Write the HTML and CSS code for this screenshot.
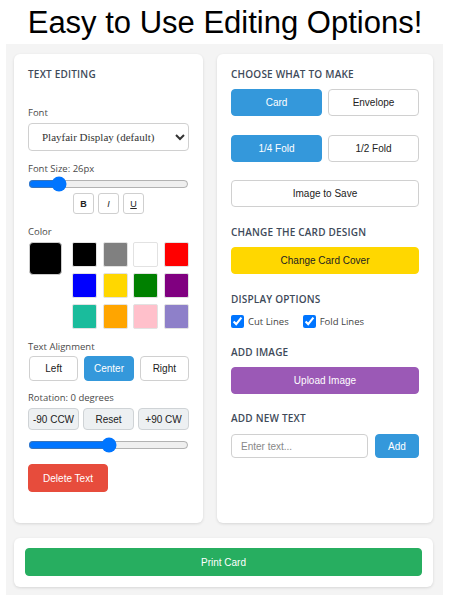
FILE: index.html
```html
<!DOCTYPE html>
<html lang="en">
<head>
<meta charset="utf-8">
<title>Easy to Use Editing Options!</title>
<link rel="stylesheet" href="styles.css">
</head>
<body>
<h1 class="title">Easy to Use Editing Options!</h1>
<div class="app">
  <div class="columns">
    <div class="panel left">
      <h2 class="heading">TEXT EDITING</h2>
      <div class="label first">Font</div>
      <select class="font-select">
        <option>Playfair Display (default)</option>
      </select>
      <div class="label size-label">Font Size: 26px</div>
      <input class="range" type="range" min="12" max="100" value="26">
      <div class="style-row">
        <button class="style-btn bold">B</button>
        <button class="style-btn italic">I</button>
        <button class="style-btn under">U</button>
      </div>
      <div class="label color-label">Color</div>
      <div class="colors">
        <div class="current"></div>
        <div class="swatches">
          <span class="sw" style="background:#000000"></span>
          <span class="sw" style="background:#808080"></span>
          <span class="sw white" style="background:#ffffff"></span>
          <span class="sw" style="background:#ff0000"></span>
          <span class="sw" style="background:#0000ff"></span>
          <span class="sw" style="background:#ffd700"></span>
          <span class="sw" style="background:#008000"></span>
          <span class="sw" style="background:#800080"></span>
          <span class="sw" style="background:#1abc9c"></span>
          <span class="sw" style="background:#ffa500"></span>
          <span class="sw" style="background:#ffc0cb"></span>
          <span class="sw" style="background:#8e80c9"></span>
        </div>
      </div>
      <div class="label align-label">Text Alignment</div>
      <div class="btn-row align-row">
        <button class="btn">Left</button>
        <button class="btn active">Center</button>
        <button class="btn">Right</button>
      </div>
      <div class="label rot-label">Rotation: 0 degrees</div>
      <div class="btn-row rot-row">
        <button class="btn gray">-90 CCW</button>
        <button class="btn gray">Reset</button>
        <button class="btn gray">+90 CW</button>
      </div>
      <input class="range rot-range" type="range" min="-180" max="180" value="0">
      <button class="btn delete">Delete Text</button>
    </div>
    <div class="panel right">
      <h2 class="heading">CHOOSE WHAT TO MAKE</h2>
      <div class="btn-row pair">
        <button class="btn active">Card</button>
        <button class="btn">Envelope</button>
      </div>
      <div class="btn-row pair gap-row">
        <button class="btn active">1/4 Fold</button>
        <button class="btn">1/2 Fold</button>
      </div>
      <button class="btn full gap-row">Image to Save</button>

      <h2 class="heading section">CHANGE THE CARD DESIGN</h2>
      <button class="btn full cover">Change Card Cover</button>

      <h2 class="heading section">DISPLAY OPTIONS</h2>
      <div class="checks">
        <label class="check"><input type="checkbox" checked> Cut Lines</label>
        <label class="check"><input type="checkbox" checked> Fold Lines</label>
      </div>

      <h2 class="heading section tight">ADD IMAGE</h2>
      <button class="btn full upload">Upload Image</button>

      <h2 class="heading section tight">ADD NEW TEXT</h2>
      <div class="add-row">
        <input class="text-input" type="text" placeholder="Enter text...">
        <button class="btn active add">Add</button>
      </div>
    </div>
  </div>
  <div class="panel bottom">
    <button class="btn print">Print Card</button>
  </div>
</div>
</body>
</html>
```

FILE: styles.css
```css
* { box-sizing: border-box; }

body {
  margin: 0;
  background: #ffffff;
  font-family: "Open Sans", "Noto Sans", sans-serif;
}

.title {
  margin: 0;
  padding-top: 4px;
  height: 44px;
  line-height: 38px;
  font-family: "Liberation Sans", Arial, sans-serif;
  font-weight: normal;
  font-size: 31px;
  text-align: center;
  color: #000;
}

.app {
  margin: 0 7px 0 6px;
  background: #f4f4f4;
  padding: 10px 10px 8px 8px;
}

.columns {
  display: grid;
  grid-template-columns: 189px minmax(0, 1fr);
  column-gap: 14px;
}

.panel {
  background: #fff;
  border-radius: 6px;
  box-shadow: 0 1px 3px rgba(0, 0, 0, 0.12);
  padding: 14px;
  height: 469px;
  min-width: 0;
}

.heading {
  margin: 0;
  font-size: 10px;
  line-height: 12px;
  font-weight: 600;
  color: #3e4a59;
  letter-spacing: 0.2px;
}

.heading.section { margin-top: 19px; }
.heading.section.tight { margin-top: 18px; }

.label {
  font-size: 9.5px;
  line-height: 12px;
  color: #4a4a4a;
  margin-bottom: 4px;
}
.label.first { margin-top: 27px; }
.size-label { margin-top: 12px; margin-bottom: 2px; }
.color-label { margin-top: 12px; }
.align-label { margin-top: 12px; margin-bottom: 3px; }
.rot-label { margin-top: 11px; }

.font-select {
  display: block;
  width: 100%;
  height: 28px;
  border: 1px solid #d0d0d0;
  border-radius: 4px;
  background: #fff;
  padding: 0 6px 0 9px;
  font-family: "Liberation Serif", "DejaVu Serif", serif;
  font-size: 11px;
  color: #333;
}

.range {
  display: block;
  width: 100%;
  height: 14px;
  margin: 0;
}
.rot-range { margin-top: 8px; }

.style-row {
  display: flex;
  justify-content: center;
  gap: 4px;
  margin-top: 2px;
}

.style-btn {
  width: 21px;
  height: 21px;
  padding: 0;
  border: 1px solid #cfcfcf;
  border-radius: 3px;
  background: #fff;
  font-family: "Liberation Sans", Arial, sans-serif;
  font-size: 9px;
  color: #222;
}
.style-btn.bold { font-weight: bold; }
.style-btn.italic { font-style: italic; }
.style-btn.under { text-decoration: underline; }

.colors {
  display: flex;
  gap: 10px;
}
.current {
  width: 33px;
  height: 33px;
  background: #000;
  border-radius: 4px;
  border: 1px solid #ccc;
  margin-left: 1px;
}
.swatches {
  display: grid;
  grid-template-columns: repeat(4, 25px);
  gap: 6px 5.7px;
}
.sw {
  width: 25px;
  height: 25px;
  border-radius: 2px;
  border: 1px solid #e2e2e2;
}

.btn {
  font-family: "Liberation Sans", Arial, sans-serif;
  font-size: 10px;
  color: #222;
  background: #fff;
  border: 1px solid #d0d0d0;
  border-radius: 4px;
  padding: 0;
  cursor: pointer;
  min-width: 0;
}
.btn.active {
  background: #3498db;
  border-color: #3498db;
  color: #fff;
}

.btn-row {
  display: flex;
  gap: 6px;
}
.btn-row .btn { flex: 1; }

.align-row { padding-left: 1px; }
.align-row .btn { height: 25px; }
.rot-row { gap: 4px; }
.rot-row .btn { height: 22px; }
.btn.gray {
  background: #edf0f2;
  border-color: #cfd3d6;
}

.btn.delete {
  display: block;
  margin-top: 12px;
  width: 80px;
  height: 28px;
  background: #e74c3c;
  border-color: #e74c3c;
  color: #fff;
}

.right .pair { margin-top: 9px; }
.pair .btn { height: 27px; }
.gap-row { margin-top: 19px !important; }

.btn.full {
  display: block;
  width: 100%;
  height: 27px;
}
.btn.full.gap-row { margin-top: 18px !important; }

.cover {
  margin-top: 9px;
  background: #ffd700;
  border-color: #ffd700;
  color: #222;
}

.checks {
  display: flex;
  gap: 14px;
  margin-top: 9px;
  height: 14px;
  align-items: center;
}
.check {
  display: flex;
  align-items: center;
  gap: 4px;
  font-size: 9.5px;
  color: #444;
}
.check input {
  margin: 0;
  width: 13px;
  height: 13px;
}

.upload {
  margin-top: 9px;
  background: #9b59b6;
  border-color: #9b59b6;
  color: #fff;
}

.add-row {
  display: flex;
  gap: 7px;
  margin-top: 10px;
}
.text-input {
  flex: 1;
  min-width: 0;
  width: 0;
  height: 24px;
  border: 1px solid #d0d0d0;
  border-radius: 4px;
  padding: 0 9px;
  font-family: "Liberation Sans", Arial, sans-serif;
  font-size: 10px;
}
.text-input::placeholder { color: #888; }
.btn.add {
  flex: none;
  width: 44px;
  height: 24px;
}

.panel.bottom {
  margin-top: 15px;
  height: 49px;
  padding: 10px 11px;
}
.btn.print {
  display: block;
  width: 100%;
  height: 28px;
  background: #27ae60;
  border-color: #27ae60;
  color: #fff;
}
```
